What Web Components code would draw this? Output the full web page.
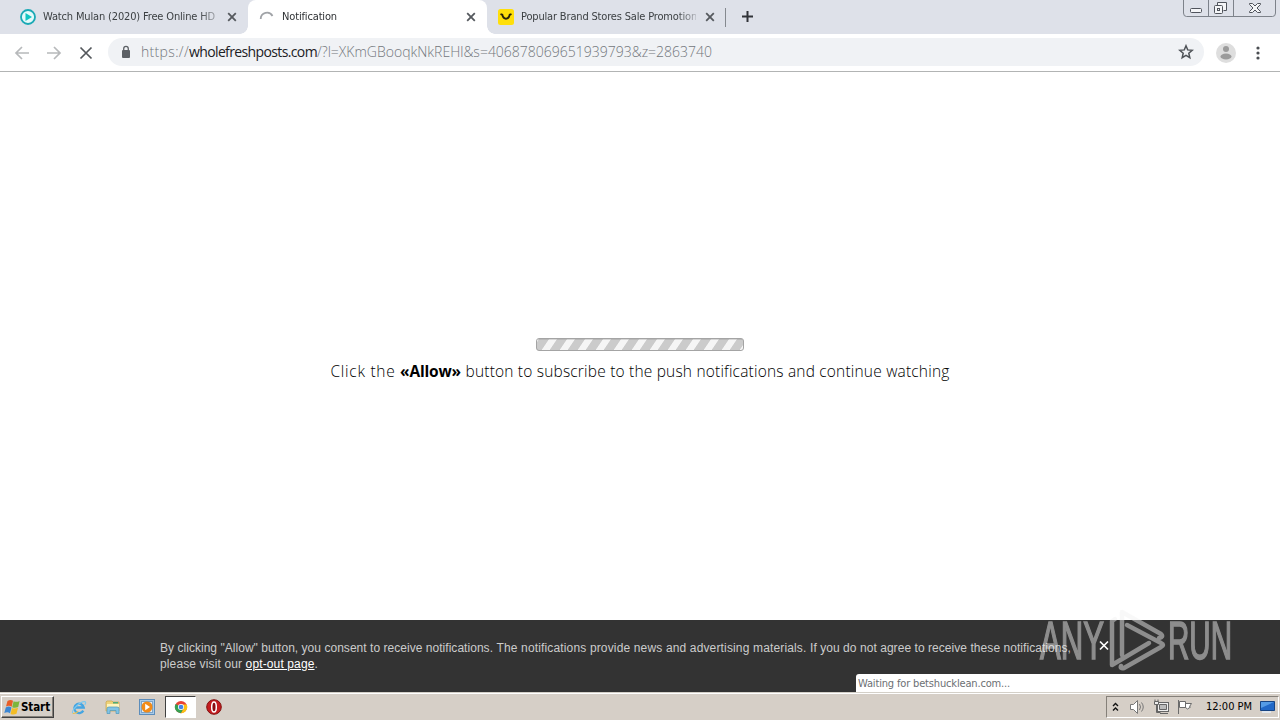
<!DOCTYPE html>
<html lang="en">
<head>
<meta charset="utf-8">
<title>Notification</title>
<style>
	body { margin: 0; overflow: hidden; background: #fff; }
</style>
</head>
<body>
<desktop-screen></desktop-screen>
<script>
;(function () {
	class Base extends HTMLElement {
		constructor() {
			super()
			this.shadow = this.attachShadow({ mode: 'open' })
			let template = document.createElement('template')
			template.innerHTML = this.template
			this.shadow.appendChild(template.content.cloneNode(true))
		}
	}

	// a single line of text, tracked to fill the given width
	class TextRun extends Base {
		connectedCallback() {
			let width = parseFloat(this.getAttribute('width'))
			let box = this.shadow.querySelector('span')
			let count = this.textContent.length
			if (!width || !count) {
				return
			}
			let natural = box.getBoundingClientRect().width
			this.style.letterSpacing = `${(width - natural) / count}px`
		}

		get template() {
			return `
				<style>
					:host { display: block; white-space: nowrap; }
					span { display: inline-block; }
				</style>
				<span><slot></slot></span>
			`
		}
	}

	class BrowserTab extends Base {
		get template() {
			return `
				<style>
					:host {
						display: flex;
						align-items: center;
						box-sizing: border-box;
						flex: none;
						width: 239px;
						height: 34px;
						padding: 0 10px 0 12px;
						color: #3c4043;
						font: 11px/16px "DejaVu Sans Condensed", "DejaVu Sans", sans-serif;
					}
					:host([active]) {
						position: relative;
						background: #fff;
						border-radius: 8px 8px 0 0;
						color: #2e3134;
					}
					:host([active])::before,
					:host([active])::after {
						content: "";
						position: absolute;
						bottom: 0;
						width: 8px;
						height: 8px;
					}
					:host([active])::before {
						left: -8px;
						background: radial-gradient(circle at 0 0, transparent 7.5px, #fff 8px);
					}
					:host([active])::after {
						right: -8px;
						background: radial-gradient(circle at 100% 0, transparent 7.5px, #fff 8px);
					}
					.icon { width: 16px; height: 16px; flex: none; }
					.title {
						flex: none;
						width: 175px;
						margin: 0 5px 0 7px;
						overflow: hidden;
						-webkit-mask-image: linear-gradient(90deg, #000 156px, rgba(0, 0, 0, .3) 174px);
						mask-image: linear-gradient(90deg, #000 156px, rgba(0, 0, 0, .3) 174px);
					}
					.close { flex: none; width: 10px; height: 10px; margin-left: 4px; }
				</style>
				<div class="icon"><slot name="icon"></slot></div>
				<div class="title"><slot></slot></div>
				<svg class="close" viewBox="0 0 10 10"><path d="M1.2 1.2l7.6 7.6M8.8 1.2L1.2 8.8" stroke="#55595e" stroke-width="1.8"/></svg>
			`
		}
	}

	class WindowButtons extends Base {
		get template() {
			return `
				<style>
					:host { display: block; width: 94px; height: 17px; }
					svg { display: block; }
				</style>
				<svg width="94" height="17" fill="none" stroke="#7d828a">
					<path d="M.5 0v13q0 3.500 3 3.500h86q3 0 3-3.500V0M25.500 0v16M50.500 0v16"/>
					<g stroke="#50545c">
						<rect x="7.500" y="8.500" width="11" height="4" rx="1" fill="#f4f5f7"/>
						<path d="M34.500 5V2.500h9v8h-3" fill="#f4f5f7"/>
						<rect x="31.500" y="5.500" width="8" height="8" rx="1" fill="#f4f5f7"/>
						<rect x="34.500" y="8.500" width="2" height="2"/>
						<path d="M66.500 3.500h3l2.500 2.500 2.500-2.500h3v1L74 8l3.500 3.500v1h-3L72 10l-2.500 2.500h-3v-1L70 8l-3.500-3.500z" fill="#f4f5f7"/>
					</g>
				</svg>
			`
		}
	}

	class TabStrip extends Base {
		get template() {
			return `
				<style>
					:host { display: flex; height: 34px; padding-left: 8px; background: #dee1e9; }
					svg { display: block; }
					.sep { width: 1px; height: 19px; margin: 8px 0 0 0; background: #85898f; }
					.plus { margin: 10px 0 0 15px; }
					window-buttons { margin: 0 3px 0 auto; }
				</style>
				<browser-tab>
					<svg slot="icon" width="16" height="16"><circle cx="8" cy="8" r="7" fill="#e4fafa" stroke="#1aa9b5" stroke-width="1.800"/><path d="M5.500 4l6.500 4-6.500 4z" fill="#12c4c2"/></svg>
					<text-run width="172">Watch Mulan (2020) Free Online HD</text-run>
				</browser-tab>
				<browser-tab active style="margin-left:1px;padding:0 9px 0 11px">
					<svg slot="icon" width="16" height="16"><path d="M1.700 10A6.300 6.300 0 0 1 13.500 7" fill="none" stroke="#a0a3a7" stroke-width="1.800"/></svg>
					<text-run width="55">Notification</text-run>
				</browser-tab>
				<browser-tab style="margin-left:-1px">
					<svg slot="icon" width="16" height="16"><rect width="16" height="16" rx="2.500" fill="#ffdf0a"/><path d="M2.500 5l1.800.8c1.200 5.200 6.200 5.200 7.400 0l1.800-.8" fill="none" stroke="#29230a" stroke-width="1.900"/></svg>
					<text-run width="181">Popular Brand Stores Sale Promotions</text-run>
				</browser-tab>
				<div class="sep"></div>
				<svg class="plus" width="13" height="13"><path d="M6.500 1v11M1 6.500h11" stroke="#303338" stroke-width="2"/></svg>
				<window-buttons></window-buttons>
			`
		}
	}

	class AddressBar extends Base {
		get template() {
			return `
				<style>
					:host {
						display: flex;
						align-items: center;
						box-sizing: border-box;
						height: 38px;
						padding: 0 14px;
						background: #fff;
						border-bottom: 1px solid #b2b4b4;
					}
					svg { display: block; flex: none; }
					.nav { display: flex; gap: 16px; }
					.field {
						display: flex;
						align-items: center;
						box-sizing: border-box;
						width: 1096px;
						height: 28px;
						margin: 0 12px 1px 14px;
						padding: 0 10px 0 11px;
						border-radius: 14px;
						background: #f0f2f5;
						color: #73777c;
						font: 300 14px/20px "Open Sans", "Noto Sans", sans-serif;
					}
					.url { display: flex; margin-left: 8px; }
					.host { color: #202124; font-weight: 400; }
					.star { margin-left: auto; }
					.menu { margin-left: 14px; }
				</style>
				<div class="nav">
					<svg width="16" height="16" fill="none" stroke="#b7b9bb" stroke-width="1.700"><path d="M15 8H2M8 2L2 8l6 6"/></svg>
					<svg width="16" height="16" fill="none" stroke="#b7b9bb" stroke-width="1.700"><path d="M1 8h13M8 2l6 6-6 6"/></svg>
					<svg width="16" height="16" fill="none" stroke="#53575b" stroke-width="1.700"><path d="M2.500 2.500l11 11M13.500 2.500l-11 11"/></svg>
				</div>
				<div class="field">
					<svg width="14" height="14"><rect x="3" y="5" width="8" height="8" rx="1" fill="#5c6065"/><path d="M4.700 6V3.700a2.300 2.300 0 0 1 4.600 0V6" fill="none" stroke="#5c6065" stroke-width="1.300"/></svg>
					<div class="url">
						<text-run width="48">https://</text-run>
						<text-run width="128" class="host">wholefreshposts.com</text-run>
						<text-run width="395">/?l=XKmGBooqkNkREHl&amp;s=406878069651939793&amp;z=2863740</text-run>
					</div>
					<svg class="star" width="16" height="16"><path d="M8 1.800l1.700 4.100 4.500.4-3.400 2.900 1 4.400L8 11.300l-3.800 2.300 1-4.400-3.400-2.900 4.500-.4z" fill="none" stroke="#4f5358" stroke-width="1.500"/></svg>
				</div>
				<svg width="20" height="20"><circle cx="10" cy="10" r="10" fill="#dedede"/><circle cx="10" cy="6" r="3" fill="#9b9b9b"/><ellipse cx="10" cy="13.500" rx="5.500" ry="3" fill="#9b9b9b"/></svg>
				<svg class="menu" width="16" height="16" fill="#4a4e52"><circle cx="8" cy="3" r="1.600"/><circle cx="8" cy="8" r="1.600"/><circle cx="8" cy="13" r="1.600"/></svg>
			`
		}
	}

	class PushPrompt extends Base {
		get template() {
			return `
				<style>
					:host {
						display: flex;
						flex-direction: column;
						align-items: center;
						flex: 1;
						box-sizing: border-box;
						padding-top: 266px;
						background: #fff;
						color: #000;
						font: 300 15.5px/22px "Open Sans", "Noto Sans", sans-serif;
					}
					svg { display: block; }
					.line { display: flex; justify-content: space-between; width: 619px; margin-top: 9px; }
					.strong { font-weight: 700; }
				</style>
				<svg width="208" height="13">
					<defs>
						<pattern id="stripes" width="18" height="13" patternUnits="userSpaceOnUse" patternTransform="translate(5 13) skewX(-34)">
							<rect width="18" height="13" fill="#cbcbcb"/>
							<rect width="8" height="13" fill="#f5f5f5"/>
						</pattern>
					</defs>
					<rect x=".5" y=".5" width="207" height="12" rx="2.500" fill="url(#stripes)" stroke="#a4a4a4"/>
					<path d="M2 1.500h204" stroke="#8a8a8a" stroke-opacity=".3"/>
				</svg>
				<div class="line">
					<text-run width="65">Click the</text-run>
					<text-run width="61" class="strong">«Allow»</text-run>
					<text-run width="484">button to subscribe to the push notifications and continue watching</text-run>
				</div>
			`
		}
	}

	class ConsentBar extends Base {
		get template() {
			return `
				<style>
					:host {
						display: flex;
						box-sizing: border-box;
						height: 72px;
						padding: 20px 0 0 160px;
						background: #333;
						color: #ccc;
						font: 12px/16px "Liberation Sans", Arial, sans-serif;
					}
					.line { display: flex; justify-content: space-between; width: 911px; }
					u { color: #fff; }
					svg { margin: 0 0 0 28px; }
				</style>
				<div>
					<div class="line">
						<text-run width="333">By clicking "Allow" button, you consent to receive notifications.</text-run>
						<text-run width="310">The notifications provide news and advertising materials.</text-run>
						<text-run width="261">If you do not agree to receive these notifications,</text-run>
					</div>
					<text-run width="158">please visit our <u>opt-out page</u>.</text-run>
				</div>
				<svg width="10" height="11"><path d="M1 1.500l8 8M9 1.500l-8 8" stroke="#fff" stroke-width="1.700"/></svg>
			`
		}
	}

	class StatusBubble extends Base {
		get template() {
			return `
				<style>
					:host {
						display: block;
						position: absolute;
						right: 0;
						bottom: 28px;
						box-sizing: border-box;
						width: 424px;
						height: 18px;
						padding-left: 2px;
						background: #fff;
						border-radius: 3px 0 0 0;
						color: #6c6f73;
						font: 11px/19px "DejaVu Sans Condensed", "DejaVu Sans", sans-serif;
					}
				</style>
				<text-run width="152">Waiting for betshucklean.com...</text-run>
			`
		}
	}

	class RunWatermark extends Base {
		get template() {
			return `
				<style>
					:host { display: block; position: absolute; left: 1036px; top: 606px; opacity: .47; }
					svg { display: block; }
					text { font: 53px "Liberation Sans", Arial, sans-serif; stroke: #f2f2f2; stroke-width: 1.6px; }
				</style>
				<svg width="212" height="68" fill="#f2f2f2">
					<text x="4" y="53" textLength="64" lengthAdjust="spacingAndGlyphs">ANY</text>
					<text x="132" y="53" textLength="64" lengthAdjust="spacingAndGlyphs">RUN</text>
					<g fill="none" stroke="#f2f2f2" stroke-width="4.500" stroke-linecap="round" stroke-linejoin="round">
						<path d="M79 13l-3 2v44l37-22"/>
						<path d="M86 49V6l39 22q3 3-2 4"/>
						<path d="M91 19l34 18q4 2 0 4L88 62q-4 1-3-2"/>
					</g>
				</svg>
			`
		}
	}

	class TaskBar extends Base {
		get template() {
			return `
				<style>
					:host {
						display: flex;
						align-items: center;
						box-sizing: border-box;
						height: 28px;
						border-top: 1px solid #d4d0c8;
						box-shadow: inset 0 1px #fff;
						padding-left: 1px;
						background: #d6cfc7;
						color: #000;
						font: 11px/20px "DejaVu Sans Condensed", "DejaVu Sans", sans-serif;
					}
					svg { display: block; flex: none; }
					.start {
						display: flex;
						align-items: center;
						box-sizing: border-box;
						width: 53px;
						height: 22px;
						margin-top: 1px;
						padding-left: 2px;
						border: 1px solid;
						border-color: #fff #404040 #404040 #fff;
						box-shadow: inset -1px -1px #858079;
						font: bold 11.5px/20px "DejaVu Sans Condensed", "DejaVu Sans", sans-serif;
					}
					.launch { display: flex; align-items: center; gap: 18px; margin: 1px 0 0 17px; }
					.pressed {
						display: grid;
						place-items: center;
						box-sizing: border-box;
						width: 31px;
						height: 22px;
						margin: 0 -8px;
						background: #fff;
						border: 1px solid;
						border-color: #404040 #fff #fff #404040;
					}
					.tray {
						display: flex;
						align-items: center;
						box-sizing: border-box;
						width: 173px;
						height: 22px;
						margin: 1px 1px 0 auto;
						padding-left: 4px;
						border: 1px solid;
						border-color: #858079 #fff #fff #858079;
					}
				</style>
				<div class="start">
					<svg width="17" height="17">
						<path d="M3.500 2q3-2 5.500-.2L7.700 7.700Q5 6 2 7.500z" fill="#e85d27"/>
						<path d="M9.600 2.200q3 1.300 6-.3L14.200 8q-3 1.500-6 .3z" fill="#7cb53c"/>
						<path d="M1.800 8.400q3-1.600 5.700 0l-1.500 5.800Q3.500 12.500.3 14z" fill="#3b86d3"/>
						<path d="M8 9q3 1.200 6-.2L12.500 14.700q-3 1.500-6 .2z" fill="#f3bc24"/>
					</svg>
					<text-run width="29">Start</text-run>
				</div>
				<div class="launch">
					<svg width="16" height="17" viewBox="0 0 18 18">
						<path d="M13.800 12.500A5.300 5.300 0 1 1 14.300 9H5" fill="none" stroke="#45a5e2" stroke-width="2.600"/>
						<path d="M2 15.500C-.5 13 10 2 15.500 2.500q2 .5 0 3.500" fill="none" stroke="#7cc8ee" stroke-width="1.400"/>
						<path d="M2 15.500q2 1 6-2" fill="none" stroke="#e7c04e" stroke-width="1.300"/>
					</svg>
					<svg width="16" height="16">
						<path d="M1 3l1-1h5l1 1h6v9H1z" fill="#eed37a" stroke="#c9a34b" stroke-width=".7"/>
						<path d="M2 5h12v3H2z" fill="#fff4bd"/><path d="M8 3h5v1.500H8z" fill="#4daa79"/>
						<path d="M2 14.500V9.500q0-1.500 2-1.500h8q2 0 2 1.500v5h-3v-3H5v3z" fill="#82c3e4" stroke="#4e99bf" stroke-width=".7"/>
					</svg>
					<svg width="16" height="16">
						<rect x=".5" y=".5" width="15" height="15" fill="#a8cbe9" stroke="#5c8dbb"/>
						<rect x="2.500" y="2.500" width="11" height="11" fill="#e4edf4" stroke="#7da4c8"/>
						<circle cx="8" cy="8" r="5.500" fill="#f28b18"/><path d="M6.200 4.800L11 8l-4.800 3.200z" fill="#fff"/>
					</svg>
					<div class="pressed"><svg width="14" height="14" viewBox="0 0 16 16">
						<circle cx="8" cy="8" r="7" fill="#e94235"/>
						<path d="M8 8L1.900 4.500A7 7 0 0 0 8 15l3-5z" fill="#34a152"/>
						<path d="M8 15A7 7 0 0 0 14.500 5H8l3 4.800z" fill="#fbc116"/>
						<circle cx="8" cy="8" r="3.500" fill="#fff"/><circle cx="8" cy="8" r="2.700" fill="#4384e8"/>
					</svg></div>
					<svg width="16" height="16">
						<circle cx="8" cy="8" r="7.300" fill="#c51c1f" stroke="#81100f"/>
						<ellipse cx="8" cy="8" rx="2.300" ry="5" fill="#8a0c10" stroke="#fff" stroke-width="1.500"/>
					</svg>
				</div>
				<div class="tray">
					<svg width="9" height="12" fill="none" stroke="#111" stroke-width="1.400"><path d="M2 5l2.500-2.500L7 5M2 9.500L4.500 7 7 9.500"/></svg>
					<svg style="margin-left:9px" width="17" height="16" fill="none" stroke="#777">
						<path d="M1.500 5.500h3l4-4v13l-4-4h-3z" fill="#fff"/><path d="M10.500 5q2 3 0 6M12.500 3.500q3.500 4.500 0 9"/>
					</svg>
					<svg style="margin-left:7px" width="17" height="17" fill="#eee" stroke="#656565">
						<rect x="4.500" y="3.500" width="11" height="9"/><path d="M6.500 5.500h7v5h-7z" fill="#bbb"/>
						<path d="M7 14.500h8M3.500 5v8.500h4" fill="none"/><path d="M1.500 2.500h4v3h-4zM2 .5v2M5 .5v2"/>
					</svg>
					<svg style="margin-left:7px" width="17" height="16" fill="#fff" stroke="#6b6b6b">
						<path d="M1.500 1v14"/><path d="M2.500 2.500h6v6h-6zM8.500 4.500h6l-2 3 1 .5-3 2-2-1.500z"/>
					</svg>
					<text-run width="46" style="margin-left:12px">12:00 PM</text-run>
					<svg style="margin-left:8px" width="16" height="14">
						<path d="M.5 1.500h14v9h-14z" fill="#2168c7" stroke="#174483"/><path d="M1 2h13L1 8z" fill="#549be6"/>
						<path d="M2 12h9" stroke="#e4eef8" stroke-width="1.500"/>
					</svg>
				</div>
			`
		}
	}

	class DesktopScreen extends Base {
		get template() {
			return `
				<style>
					:host {
						display: flex;
						flex-direction: column;
						position: relative;
						width: 1280px;
						height: 720px;
						overflow: hidden;
					}
				</style>
				<tab-strip></tab-strip>
				<address-bar></address-bar>
				<push-prompt></push-prompt>
				<consent-bar></consent-bar>
				<task-bar></task-bar>
				<status-bubble></status-bubble>
				<run-watermark></run-watermark>
			`
		}
	}

	customElements.define('text-run', TextRun)
	customElements.define('browser-tab', BrowserTab)
	customElements.define('window-buttons', WindowButtons)
	customElements.define('tab-strip', TabStrip)
	customElements.define('address-bar', AddressBar)
	customElements.define('push-prompt', PushPrompt)
	customElements.define('consent-bar', ConsentBar)
	customElements.define('status-bubble', StatusBubble)
	customElements.define('run-watermark', RunWatermark)
	customElements.define('task-bar', TaskBar)
	customElements.define('desktop-screen', DesktopScreen)
})()
</script>
</body>
</html>
